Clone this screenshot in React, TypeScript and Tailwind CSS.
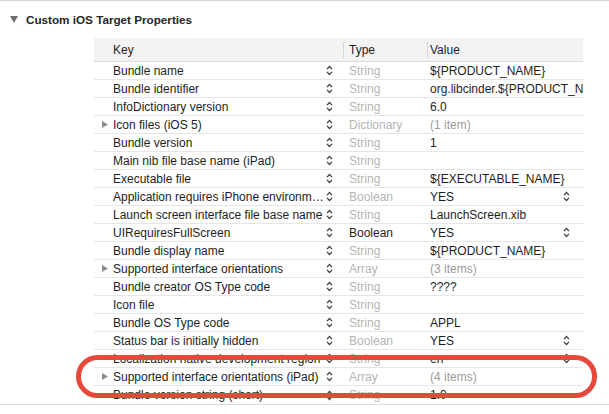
import React from 'react'

type Row = {
    key: string
    type: string
    value: string
    disclosure?: boolean
    typeDark?: boolean
    valueMuted?: boolean
    valuePopup?: boolean
}

const rows: Row[] = [
    { key: 'Bundle name', type: 'String', value: '${PRODUCT_NAME}' },
    { key: 'Bundle identifier', type: 'String', value: 'org.libcinder.${PRODUCT_NAME}' },
    { key: 'InfoDictionary version', type: 'String', value: '6.0' },
    { key: 'Icon files (iOS 5)', type: 'Dictionary', value: '(1 item)', disclosure: true, valueMuted: true },
    { key: 'Bundle version', type: 'String', value: '1' },
    { key: 'Main nib file base name (iPad)', type: 'String', value: '' },
    { key: 'Executable file', type: 'String', value: '${EXECUTABLE_NAME}' },
    { key: 'Application requires iPhone environment', type: 'Boolean', value: 'YES', valuePopup: true },
    { key: 'Launch screen interface file base name', type: 'String', value: 'LaunchScreen.xib' },
    { key: 'UIRequiresFullScreen', type: 'Boolean', value: 'YES', typeDark: true, valuePopup: true },
    { key: 'Bundle display name', type: 'String', value: '${PRODUCT_NAME}' },
    { key: 'Supported interface orientations', type: 'Array', value: '(3 items)', disclosure: true, valueMuted: true },
    { key: 'Bundle creator OS Type code', type: 'String', value: '????' },
    { key: 'Icon file', type: 'String', value: '' },
    { key: 'Bundle OS Type code', type: 'String', value: 'APPL' },
    { key: 'Status bar is initially hidden', type: 'Boolean', value: 'YES', valuePopup: true },
    { key: 'Localization native development region', type: 'String', value: 'en', valuePopup: true },
    { key: 'Supported interface orientations (iPad)', type: 'Array', value: '(4 items)', disclosure: true, valueMuted: true },
    { key: 'Bundle version string (short)', type: 'String', value: '1.0' },
]

function Stepper() {
    return (
        <svg width="7" height="11" viewBox="0 0 7 11" className="shrink-0">
            <polyline points="1,4.2 3.5,1.5 6,4.2" fill="none" stroke="#3f3f3f" strokeWidth="1.25" />
            <polyline points="1,6.8 3.5,9.5 6,6.8" fill="none" stroke="#3f3f3f" strokeWidth="1.25" />
        </svg>
    )
}

function Disclosure() {
    return (
        <svg width="6" height="7" viewBox="0 0 6 7">
            <polygon points="0,0 6,3.5 0,7" fill="#8c8c8c" />
        </svg>
    )
}

export default function App() {
    return (
        <div
            className="relative w-[609px] h-[414px] bg-white overflow-hidden text-[#1e1e1e]"
            style={{ fontFamily: '"Liberation Sans", Arial, sans-serif' }}
        >
            <div className="h-px bg-[#d3d3d3]" />

            <div className="h-[37px] flex items-center pl-[10px]">
                <svg width="8" height="7" viewBox="0 0 8 7">
                    <polygon points="0,0 8,0 4,7" fill="#6e6e6e" />
                </svg>
                <span className="ml-[8px] text-[11.7px] font-bold text-[#262626]">Custom iOS Target Properties</span>
            </div>

            <div className="ml-[94px] w-[489px] text-[12px]">
                {/* header */}
                <div className="flex h-[24px] bg-[#f3f3f3] border-b border-[#dddddd]">
                    <div className="w-[249px] flex items-center pl-[19px]">Key</div>
                    <div className="w-[84px] flex items-center">
                        <div className="w-px h-[16px] bg-[#d6d6d6]" />
                        <span className="pl-[5px]">Type</span>
                    </div>
                    <div className="flex-1 flex items-center">
                        <div className="w-px h-[16px] bg-[#d6d6d6]" />
                        <span className="pl-[2px]">Value</span>
                    </div>
                </div>

                {rows.map((r, i) => (
                    <div
                        key={i}
                        className={
                            i === rows.length - 1
                                ? 'flex h-[18px] items-center'
                                : 'flex h-[18px] items-center border-b border-[#e6e6e6]'
                        }
                    >
                        <div className="w-[249px] flex items-center pl-[8px] pr-[10px]">
                            <div className="w-[6px] flex items-center">{r.disclosure && <Disclosure />}</div>
                            <span className="ml-[5px] flex-1 truncate">{r.key}</span>
                            <div className="ml-[2px]">
                                <Stepper />
                            </div>
                        </div>
                        <div className={r.typeDark ? 'w-[84px] pl-[6px]' : 'w-[84px] pl-[6px] text-[#b5b5b5]'}>
                            {r.type}
                        </div>
                        <div className="flex-1 flex items-center pl-[3px] overflow-hidden">
                            <span className={r.valueMuted ? 'flex-1 whitespace-nowrap overflow-hidden text-[#9c9c9c]' : 'flex-1 whitespace-nowrap overflow-hidden'}>
                                {r.value}
                            </span>
                            {r.valuePopup && (
                                <div className="mr-[13px]">
                                    <Stepper />
                                </div>
                            )}
                        </div>
                    </div>
                ))}
            </div>

            <div className="h-px bg-[#dcdcdc]" />

            {/* red annotation ring */}
            <div className="absolute left-[76px] top-[355px] w-[521px] h-[43px] rounded-full border-[5px] border-[#e8473c]" />
        </div>
    )
}
